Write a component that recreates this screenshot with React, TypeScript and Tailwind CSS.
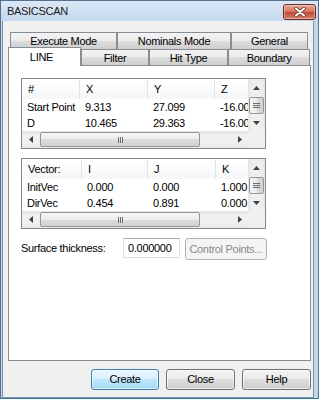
import React from 'react';

type Col = { label: string; cls: string };

const lineCols: Col[] = [
  { label: '#', cls: 'w-[58px]' },
  { label: 'X', cls: 'w-[68px]' },
  { label: 'Y', cls: 'w-[67px]' },
  { label: 'Z', cls: 'flex-1 min-w-0 border-r-0' },
];
const lineRows = [
  ['Start Point', '9.313', '27.099', '-16.000'],
  ['D', '10.465', '29.363', '-16.000'],
];

const vecCols: Col[] = [
  { label: 'Vector:', cls: 'w-[60px]' },
  { label: 'I', cls: 'w-[66px]' },
  { label: 'J', cls: 'w-[68px]' },
  { label: 'K', cls: 'flex-1 min-w-0 border-r-0' },
];
const vecRows = [
  ['InitVec', '0.000', '0.000', '1.000'],
  ['DirVec', '0.454', '0.891', '0.000'],
];

function Arrow({ dir }: { dir: 'up' | 'down' | 'left' | 'right' }) {
  const d = {
    up: 'M0 4 L3.5 0 L7 4Z',
    down: 'M0 0 L3.5 4 L7 0Z',
    left: 'M4 0 L0 3.5 L4 7Z',
    right: 'M0 0 L4 3.5 L0 7Z',
  }[dir];
  const horiz = dir === 'left' || dir === 'right';
  return (
    <svg width={horiz ? 4 : 7} height={horiz ? 7 : 4} viewBox={horiz ? '0 0 4 7' : '0 0 7 4'}>
      <path d={d} fill="#3f3f3f" />
    </svg>
  );
}

function HScroll() {
  return (
    <div className="h-[17px] flex bg-[linear-gradient(#e3e3e3,#efefef_25%,#efefef_75%,#e8e8e8)]">
      <div className="w-[17px] flex items-center justify-center"><Arrow dir="left" /></div>
      <div className="ml-[1px] w-[160px] my-[1px] rounded-[2px] border border-[#979797] bg-[linear-gradient(#f6f6f6,#ececec_50%,#dcdcdc_50%,#d2d2d2)] flex items-center justify-center gap-[1px]">
        <div className="w-[1px] h-[6px] bg-[#6e6e6e]" />
        <div className="w-[1px] h-[6px] bg-[#6e6e6e]" />
        <div className="w-[1px] h-[6px] bg-[#6e6e6e]" />
      </div>
      <div className="flex-1" />
      <div className="w-[17px] flex items-center justify-center"><Arrow dir="right" /></div>
    </div>
  );
}

function VScroll() {
  return (
    <div className="h-[52px] flex flex-col bg-[linear-gradient(90deg,#e3e3e3,#efefef_25%,#efefef_75%,#e8e8e8)]">
      <div className="h-[17px] flex items-center justify-center"><Arrow dir="up" /></div>
      <div className="mt-[1px] h-[17px] mx-[1px] rounded-[2px] border border-[#979797] bg-[linear-gradient(90deg,#f6f6f6,#ececec_50%,#dcdcdc_50%,#d2d2d2)] flex flex-col items-center justify-center gap-[1px]">
        <div className="w-[7px] h-[1px] bg-[#6e6e6e]" />
        <div className="w-[7px] h-[1px] bg-[#6e6e6e]" />
        <div className="w-[7px] h-[1px] bg-[#6e6e6e]" />
      </div>
      <div className="h-[17px] flex items-center justify-center"><Arrow dir="down" /></div>
    </div>
  );
}

function Grid({ cols, rows }: { cols: Col[]; rows: string[][] }) {
  return (
    <div className="w-[245px] h-[71px] border border-[#828790] bg-white flex">
      <div className="w-[226px] flex flex-col">
        <div className="h-[20px] flex bg-[linear-gradient(#ffffff,#f6f7f9)]">
          {cols.map((c) => (
            <div
              key={c.label}
              className={`${c.cls} shrink-0 h-full flex items-center pl-[6px] border-r border-[#e0e3e7] overflow-hidden whitespace-nowrap`}
            >
              {c.label}
            </div>
          ))}
        </div>
        {rows.map((r) => (
          <div key={r[0]} className="h-[16px] flex">
            {r.map((v, i) => (
              <div
                key={i}
                className={`${cols[i].cls} shrink-0 flex items-center pl-[5px] overflow-hidden whitespace-nowrap`}
              >
                {v}
              </div>
            ))}
          </div>
        ))}
        <HScroll />
      </div>
      <div className="w-[17px] flex flex-col">
        <VScroll />
        <div className="h-[17px] bg-[#f0f0f0]" />
      </div>
    </div>
  );
}

const tabBg =
  'border border-b-0 border-[#898c95] bg-[linear-gradient(#f3f3f3,#ebebeb_50%,#dddddd_50%,#cfcfcf)] flex items-center justify-center whitespace-nowrap';

function Button({ label, primary }: { label: string; primary?: boolean }) {
  return (
    <div
      className={
        primary
          ? 'w-[68px] h-[21px] rounded-[3px] border border-[#3c7fb1] bg-[linear-gradient(#eaf6fd,#d9f0fc_45%,#bee6fd_50%,#a7d9f5)] shadow-[inset_0_0_0_1px_rgba(255,255,255,0.6)] flex items-center justify-center'
          : 'w-[69px] h-[21px] rounded-[3px] border border-[#707070] bg-[linear-gradient(#f2f2f2,#ebebeb_45%,#dddddd_50%,#cfcfcf)] shadow-[inset_0_0_0_1px_rgba(255,255,255,0.6)] flex items-center justify-center'
      }
    >
      {label}
    </div>
  );
}

export default function App() {
  return (
    <div className="w-[319px] h-[399px] flex flex-col border border-[#56708f] border-b-[#2e7d9b] bg-[#c4d6ec] font-['Liberation_Sans',Arial,sans-serif] text-[11px] tracking-[-0.3px] text-black overflow-hidden">
      {/* title bar */}
      <div className="h-[20px] shrink-0 flex items-start justify-between pl-[6px] pr-[2px] bg-[linear-gradient(#dbe7f5,#c6d8ee)]">
        <span className="mt-[4px] leading-[13px] text-[#1a1a1a]">BASICSCAN</span>
        <div className="mt-[3px] w-[33px] h-[16px] rounded-[3px] border border-[#6b2c26] bg-[linear-gradient(#e9a99a,#d7755f_45%,#c44a36_55%,#d3826b)] shadow-[inset_0_0_0_1px_rgba(255,255,255,0.35)] flex items-center justify-center">
          <svg width="12" height="10" viewBox="0 0 12 10">
            <path d="M2 1.5 L10 8.5 M10 1.5 L2 8.5" stroke="#5a2a24" strokeWidth="3.4" strokeLinecap="round" />
            <path d="M2 1.5 L10 8.5 M10 1.5 L2 8.5" stroke="#fff" strokeWidth="2" strokeLinecap="round" />
          </svg>
        </div>
      </div>

      <div className="flex-1 ml-[1px] mr-[4px] border-x border-b border-[#7d90a8] bg-[#f0f0f0] pl-[5px] pr-[2px] pt-[11px] flex flex-col">
        {/* back row of tabs */}
        <div className="flex h-[17px] pl-[2px]">
          <div className={`w-[107px] ${tabBg}`}>Execute Mode</div>
          <div className={`w-[114px] ${tabBg}`}>Nominals Mode</div>
          <div className={`w-[77px] ${tabBg}`}>General</div>
        </div>
        {/* front row of tabs */}
        <div className="flex items-end h-[16px] relative z-10">
          <div className="w-[73px] h-[19px] -mb-px bg-white border border-b-0 border-[#898c95] flex items-center justify-center pr-[6px]">
            LINE
          </div>
          <div className={`w-[68px] h-[16px] pt-[1px] ${tabBg}`}>Filter</div>
          <div className={`w-[79px] h-[16px] pt-[1px] ${tabBg}`}>Hit Type</div>
          <div className={`w-[82px] h-[16px] pt-[1px] ${tabBg}`}>Boundary</div>
        </div>

        {/* tab page */}
        <div className="h-[296px] border border-[#898c95] bg-white pt-[12px] pl-[12px] flex flex-col gap-[9px]">
          <Grid cols={lineCols} rows={lineRows} />
          <Grid cols={vecCols} rows={vecRows} />
          <div className="flex items-start">
            <div className="w-[102px] h-[20px] flex items-center">Surface thickness:</div>
            <div className="w-[57px] h-[20px] border border-[#dbdfe6] border-t-[#abadb3] bg-white flex items-center pl-[4px]">
              0.000000
            </div>
            <div className="ml-[5px] w-[82px] h-[22px] rounded-[3px] border border-[#adb2b5] bg-[#f4f4f4] text-[#8a8a8a] flex items-center justify-center">
              Control Points...
            </div>
          </div>
        </div>

        {/* dialog buttons */}
        <div className="mt-[8px] flex justify-end gap-[7px]">
          <Button label="Create" primary />
          <Button label="Close" />
          <Button label="Help" />
        </div>
      </div>
    </div>
  );
}
